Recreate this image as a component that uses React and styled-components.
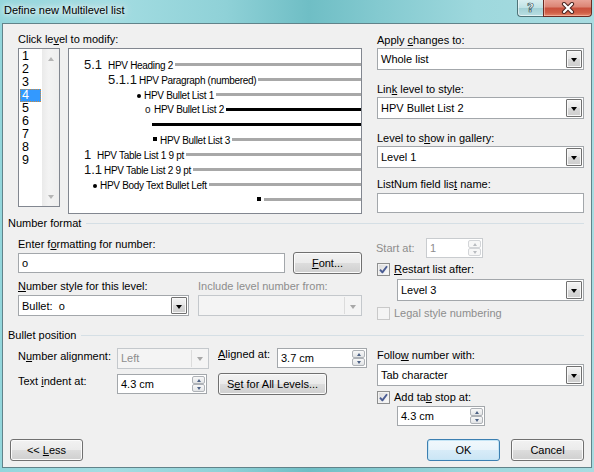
import React from 'react';
import styled, { createGlobalStyle, css } from 'styled-components';

const Global = createGlobalStyle`
  html, body { margin: 0; padding: 0; }
  body {
    width: 594px; height: 472px; overflow: hidden;
    font-family: "Liberation Sans", Arial, sans-serif;
    font-size: 11px; color: #000;
  }
  * { box-sizing: border-box; }
`;

const Window = styled.div`
  width: 594px; height: 472px;
  display: flex; flex-direction: column;
  padding: 0 2px 4px 2px;
  background: linear-gradient(90deg, #93d6dc 0%, #a4dde2 18%, #8fd1d7 38%, #6fbec5 52%, #84cad0 64%, #9ed8dd 80%, #a8dce1 100%);
`;

const TitleBar = styled.div`
  height: 23px; flex: none;
  display: flex; align-items: flex-start;
`;

const Title = styled.div`
  padding: 3px 0 0 2px;
  line-height: 14px;
  color: #000;
  text-shadow: 0 0 8px rgba(255,255,255,0.95), 0 0 4px rgba(255,255,255,0.9), 0 0 14px rgba(255,255,255,0.7);
`;

const Caption = styled.div`
  margin-left: auto;
  display: flex;
`;

const HelpBtn = styled.div`
  width: 26px; height: 17px;
  border: 1px solid #4e7378; border-top: none; border-right: none;
  border-radius: 0 0 0 4px;
  background: linear-gradient(#d9eef0 0%, #bfe2e5 48%, #a3d0d5 52%, #b9dfe3 100%);
  box-shadow: inset 0 -1px 0 rgba(255,255,255,0.6), inset 1px 0 0 rgba(255,255,255,0.5);
  display: flex; align-items: center; justify-content: center;
  font-family: "DejaVu Sans", sans-serif; font-weight: bold; font-size: 12px;
  color: #fff;
  -webkit-text-stroke: 0.7px #34545a;
`;

const CloseBtn = styled.div`
  width: 49px; height: 17px;
  border: 1px solid #6b2a22; border-top: none;
  border-radius: 0 0 4px 0;
  background: linear-gradient(#e8a397 0%, #dc8676 42%, #c9513d 52%, #cf5e46 78%, #e3866b 100%);
  box-shadow: inset 0 -1px 0 rgba(255,200,180,0.6), inset 1px 0 0 rgba(255,220,210,0.5);
  display: flex; align-items: center; justify-content: center;
`;

const Client = styled.div`
  flex: 1;
  border: 1px solid #61838a;
  background: #f0f0f0;
  display: flex; flex-direction: column;
`;

const U = styled.span`
  text-decoration: underline;
  text-underline-offset: 1px;
`;

const Label = styled.div`
  height: 14px; line-height: 14px;
  white-space: nowrap;
  flex: none;
  color: ${p => (p.$disabled ? '#8d8d8d' : '#000')};
  margin-top: ${p => p.$mt || 0}px;
  padding-top: ${p => p.$pt || 0}px;
`;

const TopArea = styled.div`
  display: flex; gap: 15px;
  padding: 8px 0 0 15px;
`;

const Column = styled.div`
  width: ${p => p.$w}px; flex: none;
  display: flex; flex-direction: column; align-items: flex-start;
  padding-top: ${p => p.$pt || 0}px;
`;

const LevelRow = styled.div`
  display: flex; gap: 8px;
  margin-top: 2px;
`;

const ListBox = styled.div`
  width: 42px; height: 159px;
  border: 1px solid #828790;
  background: #fff;
  display: flex;
`;

const ListItems = styled.div`
  width: 22px;
  padding: 1px 0 0 1px;
`;

const ListItem = styled.div`
  height: 13px; line-height: 13px;
  padding-left: 2px;
  font-size: 12.5px;
  ${p => p.$sel && css`
    background: #3399ff; color: #fff;
    outline: 1px dotted #c98a3e; outline-offset: -1px;
  `}
`;

const ScrollBar = styled.div`
  width: 17px; margin-left: auto;
  background: linear-gradient(90deg, #eaeaea, #f3f3f3 40%, #eeeeee);
  display: flex; flex-direction: column; justify-content: space-between; align-items: center;
  padding: 8px 0 7px;
`;

const Arrow = styled.span`
  width: 0; height: 0;
  border-left: 3.5px solid transparent; border-right: 3.5px solid transparent;
  ${p => (p.$up ? css`border-bottom: 4px solid #b5b5b5;` : css`border-top: 4px solid #b5b5b5;`)}
`;

const Preview = styled.div`
  width: 294px; height: 166px;
  border: 1px solid #828790;
  background: #fff;
  padding-top: 8px;
`;

const PRow = styled.div`
  display: flex; align-items: center;
  height: 15px;
  padding-left: ${p => p.$indent}px;
`;

const PText = styled.div`
  display: flex; align-items: baseline; flex: none;
`;

const PNum = styled.span`
  display: inline-block; flex: none;
  width: ${p => p.$w}px;
  font-size: ${p => p.$size || 13}px;
  line-height: 15px;
  color: #111;
  white-space: nowrap;
`;

const Dot = styled.span`
  display: inline-block;
  width: ${p => p.$s}px; height: ${p => p.$s}px;
  margin-bottom: ${p => p.$lift}px;
  background: #000;
  border-radius: ${p => (p.$round ? '50%' : '0')};
`;

const PLabel = styled.span`
  font-size: 10px; line-height: 15px;
  letter-spacing: -0.3px;
  white-space: nowrap;
  color: #000;
`;

const PLine = styled.span`
  flex: 1; height: 3px;
  margin-left: ${p => p.$ml}px;
  background: ${p => (p.$dark ? '#000' : '#a8a8a8')};
`;

const ComboBox = styled.div`
  width: ${p => p.$w}px; height: ${p => p.$h}px; flex: none;
  margin-top: ${p => p.$mt || 0}px;
  margin-left: ${p => p.$ml || 0}px;
  border: 1px solid ${p => (p.$disabled ? '#c4c8cc' : '#a3a7ab')};
  background: ${p => (p.$disabled ? '#f4f4f4' : '#fff')};
  display: flex; align-items: center;
`;

const FieldText = styled.span`
  flex: 1;
  padding-left: 3px;
  white-space: pre; overflow: hidden;
  color: ${p => (p.$disabled ? '#8d8d8d' : '#000')};
`;

const DropBtn = styled.span`
  width: 16px; align-self: stretch; margin: 1px;
  display: flex; align-items: center; justify-content: center;
  ${p => (p.$disabled
    ? css`border-left: 1px solid #dcdcdc;`
    : css`
      border: 1px solid #707070; border-radius: 1px;
      background: linear-gradient(#f4f4f4, #e7e7e7 50%, #d9d9d9 50%, #cdcdcd);
      box-shadow: inset 0 0 0 1px #f8f8f8;
    `)}
  &::after {
    content: '';
    margin-top: 2px;
    border-left: 3.5px solid transparent; border-right: 3.5px solid transparent;
    border-top: 4px solid ${p => (p.$disabled ? '#a8a8a8' : '#000')};
  }
`;

const TextBox = styled.div`
  width: ${p => p.$w}px; height: ${p => p.$h || 20}px; flex: none;
  margin-top: ${p => p.$mt || 0}px;
  border: 1px solid #a3a7ab;
  background: #fff;
  display: flex; align-items: center;
`;

const SpinBox = styled.div`
  width: ${p => p.$w}px; height: 20px; flex: none;
  margin-top: ${p => p.$mt || 0}px;
  margin-left: ${p => p.$ml || 0}px;
  border: 1px solid ${p => (p.$disabled ? '#c9cccf' : '#a3a7ab')};
  background: #fff;
  display: flex; align-items: center;
`;

const SpinBtns = styled.div`
  width: 13px; align-self: stretch; margin: 1px;
  display: flex; flex-direction: column;
`;

const SpinBtn = styled.span`
  flex: 1;
  border: 1px solid ${p => (p.$disabled ? '#d3d5d8' : '#aeb2b7')};
  border-radius: 2px;
  background: ${p => (p.$disabled ? '#f7f7f7' : 'linear-gradient(#f8f8f8, #e2e4e6)')};
  display: flex; align-items: center; justify-content: center;
  &::after {
    content: '';
    border-left: 2.5px solid transparent; border-right: 2.5px solid transparent;
    ${p => (p.$up
      ? css`border-bottom: 3px solid ${p.$disabled ? '#b9bcc0' : '#4d6185'};`
      : css`border-top: 3px solid ${p.$disabled ? '#b9bcc0' : '#4d6185'};`)}
  }
`;

const Button = styled.button`
  width: ${p => p.$w}px; height: 22px; flex: none;
  margin-left: ${p => p.$ml || 0}px;
  padding: 0;
  font: 11px "Liberation Sans", Arial, sans-serif;
  color: #000;
  border: 1px solid ${p => (p.$default ? '#3c7fb1' : '#707070')};
  border-radius: 3px;
  background: ${p => (p.$default
    ? 'linear-gradient(#f1f8fc 0%, #e9f4fb 48%, #d8ecf8 50%, #cbe5f5 100%)'
    : 'linear-gradient(#f2f2f2 0%, #ebebeb 48%, #dddddd 50%, #cfcfcf 100%)')};
  box-shadow: inset 0 0 0 1px ${p => (p.$default ? '#c4e5f6' : '#fbfbfb')};
`;

const CheckRow = styled.div`
  display: flex; align-items: center; gap: 4px;
  height: 14px; flex: none;
  margin-top: ${p => p.$mt || 0}px;
  color: ${p => (p.$disabled ? '#8d8d8d' : '#000')};
  white-space: nowrap;
`;

const CheckBox = styled.span`
  width: 13px; height: 13px; flex: none;
  border: 1px solid ${p => (p.$disabled ? '#c9c9c9' : '#8e8f8f')};
  background: ${p => (p.$disabled ? '#f4f4f4' : 'linear-gradient(135deg, #d9d9d9, #fdfdfd)')};
  box-shadow: inset 0 0 0 1px ${p => (p.$disabled ? '#f4f4f4' : '#f2f2f2')};
  display: flex; align-items: center; justify-content: center;
`;

const GroupHeader = styled.div`
  display: flex; align-items: center;
  height: 14px; line-height: 14px;
  margin-top: ${p => p.$mt || 0}px;
  padding: 0 7px 0 5px;
  white-space: nowrap;
`;

const GroupLine = styled.span`
  flex: 1; height: 1px;
  margin-left: ${p => p.$ml}px;
  background: #d5dfe5;
`;

const SectionBody = styled.div`
  display: flex; gap: ${p => p.$gap}px;
  padding: ${p => p.$pt || 0}px 0 0 15px;
`;

const FieldRow = styled.div`
  display: flex; align-items: center; gap: ${p => p.$gap || 0}px;
  margin-top: ${p => p.$mt || 0}px;
  height: ${p => p.$h}px;
`;

const StyleGrid = styled.div`
  display: grid;
  grid-template-columns: 171px 164px;
  column-gap: 9px; row-gap: 2px;
  margin-top: 5px;
`;

const StartLabel = styled.span`
  width: 50px; color: #8d8d8d; margin-left: -1px;
`;

const BPGrid = styled.div`
  width: 349px; flex: none;
  display: grid;
  grid-template-columns: 99px 101px 59px 90px;
  grid-template-rows: 22px 22px;
  row-gap: 4px;
  align-items: center;
`;

const GridLabel = styled.div`
  align-self: start;
  padding-top: ${p => p.$pt || 0}px;
  line-height: 14px; white-space: nowrap;
`;

const SpanCell = styled.div`
  grid-column: 3 / span 2;
`;

const ButtonRow = styled.div`
  display: flex;
  margin-top: 13px;
  padding: 0 7px;
`;

function Combo({ w = 207, h = 22, value, disabled, mt, ml }) {
  return (
    <ComboBox $w={w} $h={h} $mt={mt} $ml={ml} $disabled={disabled}>
      <FieldText $disabled={disabled}>{value}</FieldText>
      <DropBtn $disabled={disabled} />
    </ComboBox>
  );
}

function Spin({ w, value, disabled, mt, ml }) {
  return (
    <SpinBox $w={w} $mt={mt} $ml={ml} $disabled={disabled}>
      <FieldText $disabled={disabled}>{value}</FieldText>
      <SpinBtns>
        <SpinBtn $up $disabled={disabled} />
        <SpinBtn $disabled={disabled} />
      </SpinBtns>
    </SpinBox>
  );
}

function Check({ checked, disabled, children, mt }) {
  return (
    <CheckRow $mt={mt} $disabled={disabled}>
      <CheckBox $disabled={disabled}>
        {checked && (
          <svg width="9" height="9" viewBox="0 0 9 9">
            <path d="M1 4.6 L3.4 7.4 L8 1.2" fill="none" stroke="#4a5c93" strokeWidth="1.9" strokeLinejoin="round" />
          </svg>
        )}
      </CheckBox>
      <span>{children}</span>
    </CheckRow>
  );
}

const previewRows = [
  { indent: 15, num: '5.1', w: 24, label: 'HPV Heading 2' },
  { indent: 39, num: '5.1.1', w: 31, label: 'HPV Paragraph (numbered)' },
  { indent: 68, dot: 'round', w: 7, label: 'HPV Bullet List 1' },
  { indent: 76, num: 'o', w: 9, size: 10, label: 'HPV Bullet List 2', dark: true },
  { indent: 83, dark: true },
  { indent: 84, dot: 'square', w: 7, label: 'HPV Bullet List 3' },
  { indent: 15, num: '1', w: 13, label: 'HPV Table List 1 9 pt' },
  { indent: 15, num: '1.1', w: 20, label: 'HPV Table List 2 9 pt' },
  { indent: 24, dot: 'round', w: 7, label: 'HPV Body Text Bullet Left' },
  { indent: 188, dot: 'square', w: 7 },
];

export default function App() {
  return (
    <>
      <Global />
      <Window>
        <TitleBar>
          <Title>Define new Multilevel list</Title>
          <Caption>
            <HelpBtn>?</HelpBtn>
            <CloseBtn>
              <svg width="14" height="12" viewBox="0 0 14 12">
                <path d="M3 2 L11 10 M11 2 L3 10" stroke="#4a2420" strokeWidth="4.2" strokeLinecap="round" />
                <path d="M3 2 L11 10 M11 2 L3 10" stroke="#ffffff" strokeWidth="2.2" strokeLinecap="round" />
              </svg>
            </CloseBtn>
          </Caption>
        </TitleBar>
        <Client>
          <TopArea>
            <Column $w={344}>
              <Label>Click le<U>v</U>el to modify:</Label>
              <LevelRow>
                <ListBox>
                  <ListItems>
                    {[1, 2, 3, 4, 5, 6, 7, 8, 9].map(n => (
                      <ListItem key={n} $sel={n === 4}>{n}</ListItem>
                    ))}
                  </ListItems>
                  <ScrollBar>
                    <Arrow $up />
                    <Arrow />
                  </ScrollBar>
                </ListBox>
                <Preview>
                  {previewRows.map((r, i) => (
                    <PRow key={i} $indent={r.indent}>
                      {(r.num || r.dot) && (
                        <PText>
                          <PNum $w={r.w} $size={r.size}>
                            {r.dot === 'round' && <Dot $s={4} $lift={1} $round />}
                            {r.dot === 'square' && <Dot $s={4} $lift={3} />}
                            {r.num}
                          </PNum>
                          {r.label && <PLabel>{r.label}</PLabel>}
                        </PText>
                      )}
                      <PLine $dark={r.dark} $ml={r.label ? 2 : 0} />
                    </PRow>
                  ))}
                </Preview>
              </LevelRow>
            </Column>
            <Column $w={207} $pt={1}>
              <Label>Apply <U>c</U>hanges to:</Label>
              <Combo mt={1} value="Whole list" />
              <Label $mt={12}>Lin<U>k</U> level to style:</Label>
              <Combo mt={1} value="HPV Bullet List 2" />
              <Label $mt={12}>Level to s<U>h</U>ow in gallery:</Label>
              <Combo mt={1} value="Level 1" />
              <Label $mt={9}>ListNum field lis<U>t</U> name:</Label>
              <TextBox $w={207} $mt={2} />
            </Column>
          </TopArea>

          <GroupHeader $mt={2}>
            Number format
            <GroupLine $ml={5} />
          </GroupHeader>
          <SectionBody $gap={15}>
            <Column $w={344} $pt={7}>
              <Label>Enter f<U>o</U>rmatting for number:</Label>
              <FieldRow $mt={1} $h={22} $gap={8}>
                <TextBox $w={267}>
                  <FieldText>o</FieldText>
                </TextBox>
                <Button $w={69}><U>F</U>ont...</Button>
              </FieldRow>
              <StyleGrid>
                <Label><U>N</U>umber style for this level:</Label>
                <Label $disabled>Include level number from:</Label>
                <Combo w={171} h={21} value="Bullet:  o" />
                <Combo w={164} h={21} value="" disabled />
              </StyleGrid>
            </Column>
            <Column $w={207} $pt={8}>
              <FieldRow $h={20}>
                <StartLabel>Start at:</StartLabel>
                <Spin w={57} value="1" disabled />
              </FieldRow>
              <Check checked mt={4}><U>R</U>estart list after:</Check>
              <Combo w={187} ml={20} mt={3} value="Level 3" />
              <Check disabled mt={5}>Legal style numbering</Check>
            </Column>
          </SectionBody>

          <GroupHeader $mt={8}>
            Bullet position
            <GroupLine $ml={4} />
          </GroupHeader>
          <SectionBody $gap={10} $pt={5}>
            <BPGrid>
              <GridLabel $pt={2}>N<U>u</U>mber alignment:</GridLabel>
              <Combo w={92} h={21} value="Left" disabled />
              <GridLabel $pt={0}><U>A</U>ligned at:</GridLabel>
              <Spin w={90} value="3.7 cm" />
              <GridLabel $pt={1}>Text <U>i</U>ndent at:</GridLabel>
              <Spin w={90} value="4.3 cm" />
              <SpanCell>
                <Button $w={109}>S<U>e</U>t for All Levels...</Button>
              </SpanCell>
            </BPGrid>
            <Column $w={207} $pt={1}>
              <Label>Follo<U>w</U> number with:</Label>
              <Combo mt={2} value="Tab character" />
              <Check checked mt={4}>Add ta<U>b</U> stop at:</Check>
              <Spin w={88} ml={20} mt={2} value="4.3 cm" />
            </Column>
          </SectionBody>

          <ButtonRow>
            <Button $w={73}>&lt;&lt; <U>L</U>ess</Button>
            <Button $w={73} $ml={344} $default>OK</Button>
            <Button $w={73} $ml={11}>Cancel</Button>
          </ButtonRow>
        </Client>
      </Window>
    </>
  );
}
